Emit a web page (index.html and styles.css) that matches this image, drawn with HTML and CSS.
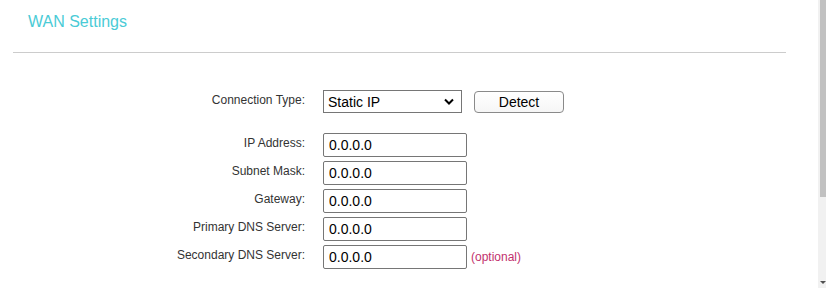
FILE: index.html
```html
<!DOCTYPE html>
<html lang="en">
<head>
  <meta charset="UTF-8" />
  <title>WAN Settings</title>
  <link rel="stylesheet" href="styles.css">
</head>
<body>
  <div class="header">
    <h3 class="title">WAN Settings</h3>
  </div>
  <div class="form">
    <label class="label">Connection Type:</label>
    <div class="field">
      <div class="select-wrap">
        <select class="select">
          <option>Static IP</option>
          <option>Dynamic IP</option>
          <option>PPPoE</option>
        </select>
        <svg class="chevron" width="10" height="7" viewBox="0 0 10 7">
          <path d="M1 1.5 L5 5.5 L9 1.5" fill="none" stroke="#000" stroke-width="2"/>
        </svg>
      </div>
      <button class="detect">Detect</button>
    </div>

    <div class="spacer"></div>

    <label class="label">IP Address:</label>
    <div class="field"><input class="text" type="text" value="0.0.0.0"></div>
    <label class="label">Subnet Mask:</label>
    <div class="field"><input class="text" type="text" value="0.0.0.0"></div>
    <label class="label">Gateway:</label>
    <div class="field"><input class="text" type="text" value="0.0.0.0"></div>
    <label class="label">Primary DNS Server:</label>
    <div class="field"><input class="text" type="text" value="0.0.0.0"></div>
    <label class="label">Secondary DNS Server:</label>
    <div class="field"><input class="text" type="text" value="0.0.0.0"><span class="hint">(optional)</span></div>
  </div>

  <div class="scrollbar">
    <div class="thumb"></div>
    <div class="arrow"></div>
  </div>
</body>
</html>
```

FILE: styles.css
```css
body {
  background: #ffffff;
  margin: 0;
  padding: 0;
  font-family: "Liberation Sans", Arial, sans-serif;
  overflow: hidden;
}
.header {
  margin: 0 40px 0 13px;
  padding: 13px 0 21px 15px;
  border-bottom: 1px solid #cccccc;
}
.title {
  margin: 0;
  font-size: 16px;
  line-height: 18px;
  font-weight: normal;
  color: #4acbd6;
}
.form {
  margin-top: 37px;
  padding-left: 8px;
  display: grid;
  grid-template-columns: 297px auto;
  column-gap: 18px;
  row-gap: 4px;
}
.spacer {
  grid-column: 1 / 3;
  height: 12px;
}
.label {
  text-align: right;
  font-size: 12px;
  line-height: 14px;
  padding-top: 3px;
  color: #333333;
}
.field {
  display: flex;
  align-items: center;
}
.select-wrap {
  position: relative;
}
.select {
  appearance: none;
  -webkit-appearance: none;
  width: 139px;
  height: 23px;
  margin: 0;
  padding: 0 0 0 4px;
  border: 1px solid #767676;
  border-radius: 0;
  background: #ffffff;
  font-family: "Liberation Sans", Arial, sans-serif;
  font-size: 14px;
  color: #000000;
}
.chevron {
  position: absolute;
  right: 8px;
  top: 8px;
  pointer-events: none;
}
.detect {
  margin-left: 12px;
  width: 90px;
  height: 22px;
  padding: 0;
  background: linear-gradient(#ffffff, #f6f6f6);
  border: 1px solid #8a8a8a;
  border-radius: 4px;
  font-family: "Liberation Sans", Arial, sans-serif;
  font-size: 14px;
  color: #000000;
  cursor: pointer;
}
.text {
  width: 144px;
  height: 24px;
  box-sizing: border-box;
  margin: 0;
  padding: 0 0 0 5px;
  border: 1px solid #767676;
  border-radius: 2px;
  font-family: "Liberation Sans", Arial, sans-serif;
  font-size: 14px;
  color: #000000;
}
.hint {
  margin-left: 4px;
  font-size: 12px;
  color: #c2306e;
}
.scrollbar {
  position: fixed;
  top: 0;
  right: 0;
  width: 8px;
  height: 100%;
  background: #f1f1f1;
}
.thumb {
  margin-left: 2px;
  width: 6px;
  height: 197px;
  background: #c1c1c1;
}
.arrow {
  position: absolute;
  bottom: 4px;
  right: 0;
  width: 0;
  height: 0;
  border-left: 3px solid transparent;
  border-right: 3px solid transparent;
  border-top: 3px solid #505050;
}
```
